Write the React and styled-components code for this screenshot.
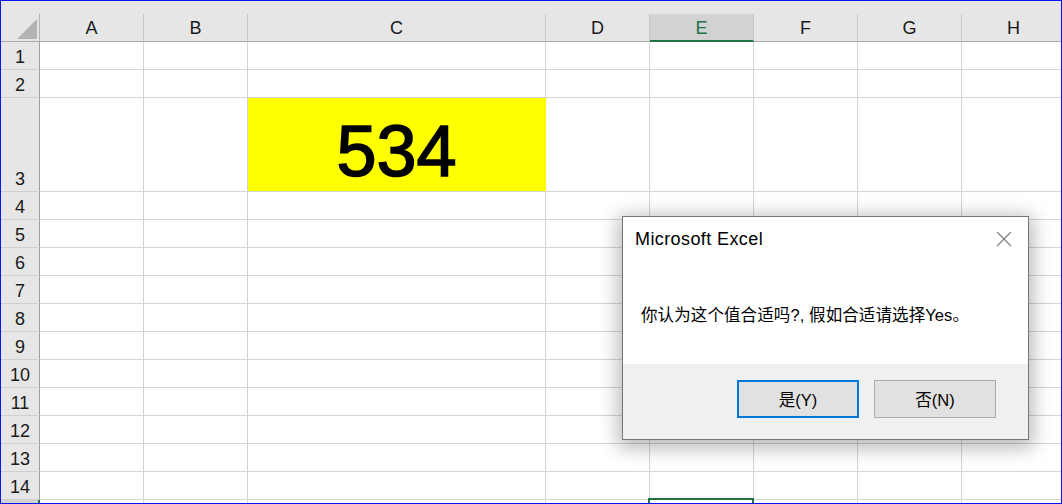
import React from 'react'
import styled, { createGlobalStyle } from 'styled-components'

const GlobalStyle = createGlobalStyle`
  html, body {
    margin: 0;
    padding: 0;
    background: #fff;
  }
  * {
    box-sizing: border-box;
  }
`

const COLUMNS = [
  { key: 'A', width: 104 },
  { key: 'B', width: 104 },
  { key: 'C', width: 298 },
  { key: 'D', width: 104 },
  { key: 'E', width: 104 },
  { key: 'F', width: 104 },
  { key: 'G', width: 104 },
  { key: 'H', width: 104 }
]

// row 15 only shows its top edge in the window, so it carries no label
const ROWS = [1, 2, 3, 4, 5, 6, 7, 8, 9, 10, 11, 12, 13, 14, 15].map(n => ({
  n,
  height: n === 3 ? 94 : 28,
  label: n < 15 ? n : ''
}))

const ACTIVE_COL = 'E'
const ACTIVE_ROW = 15

const Frame = styled.div`
  position: relative;
  width: 1062px;
  height: 504px;
  border: 1px solid #0a14f5;
  overflow: hidden;
  background: #fff;
  font-family: "Liberation Sans", Arial, sans-serif;
`

const TopStrip = styled.div`
  height: 13px;
  background: #e6e6e6;
`

const Sheet = styled.div`
  display: grid;
  grid-template-columns: 39px ${COLUMNS.map(c => c.width + 'px').join(' ')};
  grid-template-rows: 28px ${ROWS.map(r => r.height + 'px').join(' ')};
`

const Corner = styled.div`
  background: #e6e6e6;
  border-right: 1px solid #b4b4b4;
  border-bottom: 1px solid #ababab;
  display: flex;
  align-items: flex-end;
  justify-content: flex-end;
  padding: 0 2px 2px 0;
`

const CornerTriangle = styled.span`
  width: 20px;
  height: 20px;
  background: #b3b3b3;
  clip-path: polygon(100% 0, 100% 100%, 0 100%);
`

const ColHeader = styled.div`
  background: ${p => (p.$active ? '#d2d2d2' : '#e6e6e6')};
  color: ${p => (p.$active ? '#217346' : '#1a1a1a')};
  border-right: 1px solid #c8c8c8;
  border-bottom: ${p => (p.$active ? '2px solid #217346' : '1px solid #ababab')};
  display: flex;
  align-items: flex-end;
  justify-content: center;
  padding-bottom: ${p => (p.$active ? '2px' : '3px')};
  font-size: 18px;
  line-height: 20px;
`

const RowHeader = styled.div`
  background: ${p => (p.$active ? '#d2d2d2' : '#e6e6e6')};
  color: ${p => (p.$active ? '#217346' : '#1a1a1a')};
  border-right: ${p => (p.$active ? '2px solid #217346' : '1px solid #9f9f9f')};
  border-bottom: 1px solid #cfcfcf;
  display: flex;
  align-items: flex-end;
  justify-content: center;
  padding-bottom: 2px;
  font-size: 18px;
  line-height: 20px;
`

const Cell = styled.div`
  position: relative;
  background: ${p => p.$fill || '#fff'};
  border-right: 1px solid ${p => (p.$fill ? p.$fill : '#d4d4d4')};
  border-bottom: 1px solid #d4d4d4;
  display: flex;
  align-items: flex-end;
  justify-content: center;
`

const BigValue = styled.span`
  font-family: "Liberation Sans", Arial, sans-serif;
  font-size: 72px;
  line-height: 72px;
  font-weight: 400;
  -webkit-text-stroke: 1.6px #000;
  color: #000;
  padding-bottom: 4px;
`

const Selection = styled.div`
  position: absolute;
  top: -2px;
  left: -2px;
  right: -1px;
  bottom: -2px;
  border: 2px solid #217346;
`

const Dialog = styled.div`
  position: absolute;
  left: 621px;
  top: 215px;
  width: 407px;
  height: 224px;
  background: #fff;
  border: 1px solid #767676;
  box-shadow: 0 4px 18px 4px rgba(0, 0, 0, 0.28);
  display: flex;
  flex-direction: column;
  font-family: "Liberation Sans", "Noto Sans CJK SC", sans-serif;
  color: #000;
`

const TitleBar = styled.div`
  height: 44px;
  display: flex;
  align-items: center;
  justify-content: space-between;
  padding: 0 16px 0 12px;
`

const Title = styled.span`
  font-size: 18px;
  letter-spacing: 0.4px;
  padding-top: 1px;
`

const CloseButton = styled.button`
  width: 16px;
  height: 16px;
  padding: 0;
  border: none;
  background: none;
  display: flex;
  align-items: center;
  justify-content: center;
`

const Message = styled.div`
  flex: 1;
  display: flex;
  align-items: center;
  padding: 2px 0 0 18px;
  font-size: 16.5px;
  letter-spacing: 0.1px;
`

const Footer = styled.div`
  height: 75px;
  background: #f0f0f0;
  display: flex;
  justify-content: flex-end;
  gap: 15px;
  padding: 16px 32px 0 0;
`

const DialogButton = styled.button`
  width: 122px;
  height: 38px;
  background: #e1e1e1;
  border: ${p => (p.$primary ? '2px solid #0078d7' : '1px solid #adadad')};
  font-family: "Liberation Sans", "Noto Sans CJK SC", sans-serif;
  font-size: 16.5px;
  color: #000;
  padding: 0;
`

const CloseIcon = () => (
  <svg width="16" height="16" viewBox="0 0 16 16">
    <path d="M1 1 L15 15 M15 1 L1 15" stroke="#7a7a7a" strokeWidth="1.1" fill="none" />
  </svg>
)

function cellContent(row, col) {
  if (row === 3 && col === 'C') return <BigValue>534</BigValue>
  if (row === ACTIVE_ROW && col === ACTIVE_COL) return <Selection />
  return null
}

export default function App() {
  return (
    <Frame>
      <GlobalStyle />
      <TopStrip />
      <Sheet>
        <Corner>
          <CornerTriangle />
        </Corner>
        {COLUMNS.map(c => (
          <ColHeader key={c.key} $active={c.key === ACTIVE_COL}>
            {c.key}
          </ColHeader>
        ))}
        {ROWS.map(r => (
          <React.Fragment key={r.n}>
            <RowHeader $active={r.n === ACTIVE_ROW}>{r.label}</RowHeader>
            {COLUMNS.map(c => (
              <Cell key={c.key} $fill={r.n === 3 && c.key === 'C' ? '#ffff00' : null}>
                {cellContent(r.n, c.key)}
              </Cell>
            ))}
          </React.Fragment>
        ))}
      </Sheet>

      <Dialog>
        <TitleBar>
          <Title>Microsoft Excel</Title>
          <CloseButton>
            <CloseIcon />
          </CloseButton>
        </TitleBar>
        <Message>你认为这个值合适吗?, 假如合适请选择Yes。</Message>
        <Footer>
          <DialogButton $primary>是(Y)</DialogButton>
          <DialogButton>否(N)</DialogButton>
        </Footer>
      </Dialog>
    </Frame>
  )
}
